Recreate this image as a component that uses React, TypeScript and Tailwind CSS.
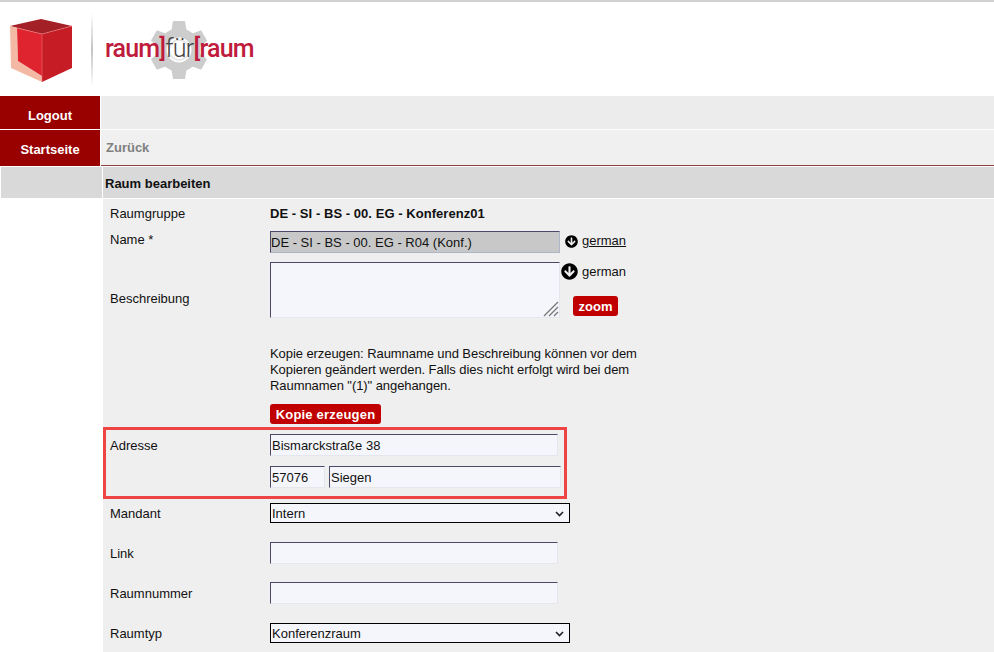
import { FaArrowCircleDown } from 'react-icons/fa'

const inputClass =
  'block h-[22px] bg-[#f5f6fb] border border-t-[#4a4a68] border-l-[#4a4a68] border-r-[#e6e7ee] border-b-[#e6e7ee] px-px text-[13px] text-[#111] outline-none'

function Cube() {
  return (
    <svg width="82" height="84" viewBox="0 0 82 84" className="shrink-0 -mt-px">
      <polygon points="10,25 41,18 72,25 42,33" fill="#a32026" />
      <polygon points="10,25 17,27 18,60 42,75 42,81 11,67" fill="#f4b9a5" />
      <polygon points="17,27 42,33 42,75 18,60" fill="#e0242f" />
      <polygon points="42,33 72,25 72,67 42,81" fill="#c51c26" />
      <polyline points="17,27 42,33 72,25" fill="none" stroke="#ee7a80" strokeWidth="0.6" />
      <line x1="42" y1="33" x2="42" y2="81" stroke="#ee7a80" strokeWidth="0.5" />
    </svg>
  )
}

function Gear() {
  const teeth = [0, 60, 120, 180, 240, 300]
  return (
    <svg width="60" height="60" viewBox="0 0 60 60" className="absolute left-[44px] top-[5px]">
      {teeth.map((a) => (
        <polygon key={a} points="24,1 36,1 38,13 22,13" fill="#cdcdcd" transform={`rotate(${a} 30 30)`} />
      ))}
      <circle cx="30" cy="30" r="17" fill="none" stroke="#cdcdcd" strokeWidth="9" />
      <circle cx="30" cy="30" r="10" fill="none" stroke="#e2e2e2" strokeWidth="1.5" />
    </svg>
  )
}

function Logo() {
  return (
    <div className="flex items-start h-[94px]">
      <Cube />
      <div className="ml-[9px] mt-[11px] w-[2px] h-[74px] bg-gradient-to-b from-white via-[#c4c4c4] to-white" />
      <div className="relative ml-[12px] mt-[13px] h-[70px] w-[160px]">
        <Gear />
        <div className="relative pt-[16px] font-['Roboto','Liberation_Sans',sans-serif] text-[25px] leading-[36px] tracking-[-0.8px] font-medium text-[#bf1b3c] whitespace-nowrap">
          raum]<span className="font-light text-[#444]">für</span>[raum
        </div>
      </div>
    </div>
  )
}

function FormRow({ label, height, mt, children }: { label?: string; height: number; mt: number; children: React.ReactNode }) {
  return (
    <div className="flex items-center" style={{ height, marginTop: mt }}>
      <div className="w-[167px] pl-[7px] pt-[2px] shrink-0">{label}</div>
      {children}
    </div>
  )
}

function NativeSelect({ value }: { value: string }) {
  return (
    <div className="relative w-[300px] h-[20px]">
      <select
        defaultValue={value}
        className="block w-full h-full appearance-none pl-px bg-[#f5f6fb] border border-black text-[13px] text-[#111] font-['Liberation_Sans',Arial,sans-serif] outline-none"
      >
        <option>{value}</option>
      </select>
      <svg width="9" height="6" viewBox="0 0 9 6" className="absolute right-[6px] top-[8px] pointer-events-none">
        <path d="M1 1 4.5 4.5 8 1" fill="none" stroke="#222" strokeWidth="1.6" />
      </svg>
    </div>
  )
}

export default function App() {
  return (
    <div className="h-[652px] w-[994px] overflow-hidden bg-white font-['Liberation_Sans',Arial,sans-serif] text-[13px] text-[#111]">
      <div className="h-[2px] bg-[#d0d0d0]" />
      <Logo />

      {/* navigation */}
      <div className="flex h-[33px]">
        <div className="w-[100px] bg-[#990000] text-white font-bold flex items-center justify-center pt-[7px]">Logout</div>
        <div className="flex-1 ml-px bg-[#ececec]" />
      </div>
      <div className="flex h-[36px] mt-px">
        <div className="w-[100px] bg-[#990000] text-white font-bold flex items-center justify-center pt-[4px]">Startseite</div>
        <div className="flex-1 ml-px bg-[#f0f0f0] border-b border-[#8f3f3f] flex items-center pl-[5px] pt-px font-bold text-[#808080]">Zurück</div>
      </div>

      <div className="flex h-[31px] mt-px">
        <div className="w-[101px] ml-px bg-[#d9d9d9]" />
        <div className="flex-1 ml-px bg-[#d9d9d9] flex items-center pl-[2px] font-bold text-[#111] pt-[3px]">Raum bearbeiten</div>
      </div>

      <div className="ml-[103px] mt-px h-[500px] pt-[6px] bg-[#efefef]">
        <div className="flex items-center h-[18px]">
          <div className="w-[167px] pl-[7px] shrink-0">Raumgruppe</div>
          <span className="font-bold tracking-[0.05px]">DE - SI - BS - 00. EG - Konferenz01</span>
        </div>

        <div className="flex mt-[8px] h-[22px]">
          <div className="w-[167px] pl-[7px] shrink-0 -mt-px">Name *</div>
          <input
            readOnly
            value="DE - SI - BS - 00. EG - R04 (Konf.)"
            className="block w-[290px] h-[22px] bg-[#c8c8c8] border border-t-[#4a4a68] border-l-[#4a4a68] border-r-[#b0b4c8] border-b-[#b0b4c8] px-0 text-[13px] text-[#111] outline-none"
          />
          <FaArrowCircleDown className="ml-[5px] mt-[4px] text-[13px] text-black" />
          <span className="ml-[4px] underline">german</span>
        </div>

        <div className="flex mt-[9px] h-[56px]">
          <div className="w-[167px] pl-[7px] shrink-0 pt-[27px]">Beschreibung</div>
          <div className="relative w-[290px] h-[56px]">
            <textarea
              readOnly
              className="block w-full h-full resize-none bg-[#f5f6fb] border border-t-[#4a4a68] border-l-[#4a4a68] border-r-[#e6e7ee] border-b-[#e6e7ee] outline-none"
            />
            <svg width="16" height="16" viewBox="0 0 16 16" className="absolute right-px bottom-px">
              <path d="M1 15 15 1M6 15 15 6M11 15 15 11" stroke="#777" strokeWidth="1.3" fill="none" />
            </svg>
          </div>
          <div className="ml-px">
            <div className="flex items-center h-[18px]">
              <FaArrowCircleDown className="text-[17px] text-black" />
              <span className="ml-[4px] pt-[2px]">german</span>
            </div>
            <button className="block ml-[12px] mt-[16px] h-[20px] w-[45px] rounded-[3px] bg-[#c00000] text-white font-bold leading-none">zoom</button>
          </div>
        </div>

        <p className="ml-[167px] mt-[28px] w-[380px] leading-[16px] tracking-[-0.07px]">
          Kopie erzeugen: Raumname und Beschreibung können vor dem Kopieren geändert werden. Falls dies nicht erfolgt wird bei dem Raumnamen "(1)" angehangen.
        </p>
        <button className="block ml-[167px] mt-[10px] h-[20px] w-[111px] rounded-[3px] bg-[#c00000] text-white font-bold leading-none tracking-[0.2px]">Kopie erzeugen</button>

        {/* highlighted address block */}
        <div className="mt-[3px] w-[464px] h-[72px] border-[3px] border-[#ef4444] pl-[4px] pt-[4px]">
          <div className="flex">
            <div className="w-[160px] shrink-0 pt-[2px]">Adresse</div>
            <input readOnly value="Bismarckstraße 38" className={`${inputClass} w-[288px]`} />
          </div>
          <div className="flex mt-[10px] ml-[160px]">
            <input readOnly value="57076" className={`${inputClass} w-[55px]`} />
            <input readOnly value="Siegen" className={`${inputClass} w-[232px] ml-[4px]`} />
          </div>
        </div>

        <FormRow label="Mandant" height={20} mt={4}>
          <NativeSelect value="Intern" />
        </FormRow>
        <FormRow label="Link" height={22} mt={19}>
          <input readOnly className={`${inputClass} w-[288px]`} />
        </FormRow>
        <FormRow label="Raumnummer" height={22} mt={18}>
          <input readOnly className={`${inputClass} w-[288px]`} />
        </FormRow>
        <FormRow label="Raumtyp" height={20} mt={19}>
          <NativeSelect value="Konferenzraum" />
        </FormRow>
      </div>
    </div>
  )
}
